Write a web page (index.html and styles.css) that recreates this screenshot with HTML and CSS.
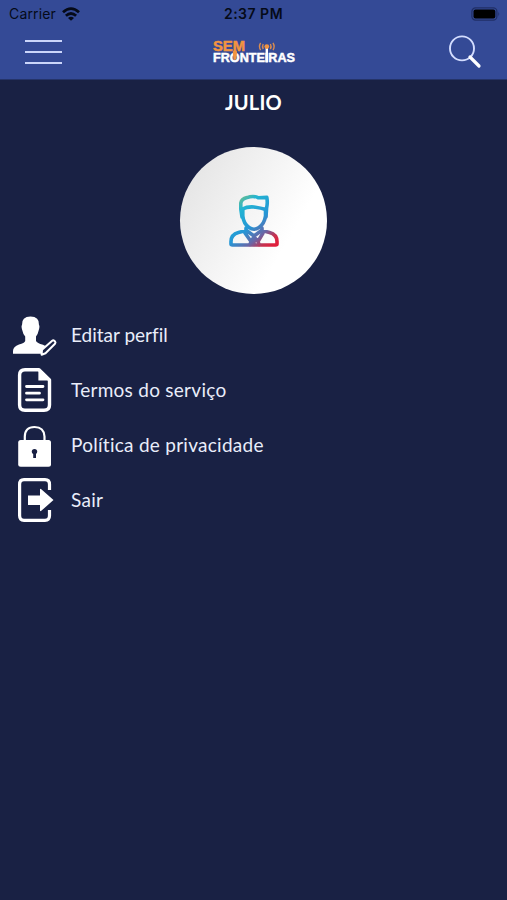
FILE: index.html
```html
<!DOCTYPE html>
<html lang="pt-BR">
<head>
  <meta charset="UTF-8">
  <meta name="viewport" content="width=device-width, initial-scale=1.0">
  <title>Sem Fronteiras - Perfil</title>
  <link rel="stylesheet" href="styles.css">
</head>
<body>
  <header class="header">
    <div class="status-bar">
      <div class="carrier">
        <span class="carrier-name">Carrier</span>
        <svg width="18" height="14" viewBox="0 0 18 14" fill="none" stroke="#050a18" stroke-width="2.8">
          <path d="M1 5.2Q9 -2 17 5.2"/>
          <path d="M3.9 8.7Q9 4.2 14.1 8.7"/>
          <path d="M9 13.8L6 10.9Q9 8.4 12 10.9Z" fill="#050a18" stroke="none"/>
        </svg>
      </div>
      <span class="time">2:37 PM</span>
      <svg class="battery" width="30" height="14" viewBox="0 0 30 14">
        <rect x="0.9" y="0.9" width="25" height="12.2" rx="3.6" fill="none" stroke="#202f67" stroke-width="1.2"/>
        <rect x="2.5" y="2.5" width="21.8" height="9" rx="2" fill="#000"/>
        <path d="M27.4 4.8Q29.2 7 27.4 9.2Z" fill="#202f67"/>
      </svg>
    </div>

    <nav class="nav-bar">
      <div class="menu-button">
        <span></span>
        <span></span>
        <span></span>
      </div>
      <svg class="logo" width="84" height="28" viewBox="0 0 84 28">
        <text class="logo-sem" x="1" y="12.8" textLength="32" lengthAdjust="spacingAndGlyphs">SEM</text>
        <text class="logo-fronteiras" x="1" y="24.2" textLength="82" lengthAdjust="spacingAndGlyphs">FRONTEIRAS</text>
        <!-- microfone -->
        <path d="M20.7 13.5L22.9 11.5L25.1 13.5L24.4 21Q22.9 23 21.4 21Z" fill="#f29441"/>
        <!-- antena -->
        <path d="M53.6 10H56V24.4H53.6Z" fill="#fff"/>
        <circle cx="54.8" cy="8.6" r="2.4" fill="#f29441"/>
        <g fill="none" stroke="#d98c50" stroke-width="1.4">
          <path d="M51.2 6Q49.8 8.6 51.2 11.1"/>
          <path d="M58.4 6Q59.8 8.6 58.4 11.1"/>
          <path d="M48.6 4.9Q46.4 8.6 48.6 12.1"/>
          <path d="M61 4.9Q63.2 8.6 61 12.1"/>
        </g>
      </svg>
      <svg class="search" width="34" height="34" viewBox="0 0 34 34" fill="none">
        <circle cx="14" cy="13.4" r="12" stroke="#d3ddff" stroke-width="1.9"/>
        <path d="M22 22L31 31" stroke="#fff" stroke-width="3.2" stroke-linecap="round"/>
      </svg>
    </nav>
  </header>

  <main class="profile">
    <h1 class="name">JULIO</h1>

    <div class="avatar">
      <svg width="50" height="53" viewBox="0 0 50 53" fill="none" stroke="url(#avatar-color)" stroke-width="3.6" stroke-linejoin="round" stroke-linecap="round">
        <defs>
          <linearGradient id="avatar-color" gradientUnits="userSpaceOnUse" x1="9" y1="5" x2="46" y2="50">
            <stop offset="0" stop-color="#69bc91"/>
            <stop offset="0.17" stop-color="#22b4d2"/>
            <stop offset="0.5" stop-color="#2596d6"/>
            <stop offset="0.73" stop-color="#6966a6"/>
            <stop offset="0.88" stop-color="#c5324f"/>
            <stop offset="1" stop-color="#e01f3c"/>
          </linearGradient>
        </defs>
        <path d="M13 23L11.8 15V9Q12.5 5 18 3.6Q24.5 1.2 29.5 3.8L37.8 3.4Q38.8 9 37.6 14L37 23"/>
        <path d="M13.5 15Q18 12.5 25 13Q32 14 36.8 15.5"/>
        <path d="M13.8 15V22Q14.5 29.5 20 33.5Q25 37 30 33.5Q35.5 29.5 36.5 22V15"/>
        <path d="M17 34V36.5L9.5 38.5Q2 40.5 2 47.5V50Q2 51 3.5 51H46.5Q48 51 48 50V47.5Q48 40.5 40.5 38.5L33 36.5V34"/>
        <path d="M17.5 36.5L25 42L32.5 36.5M16 39L22 47.5L25 43L29 47.5L34 39M22 47.5L21 50.5M29 47.5L30 50.5M25 43V50.5"/>
      </svg>
    </div>

    <ul class="options">
      <li class="option">
        <svg class="option-icon" viewBox="0 0 48 55">
          <path d="M12 17Q11.5 8.5 20.5 8.5Q29.5 8.5 29 17Q30 18 28.8 22Q28 26 26 28.5V33Q27 35 33 36.8Q36 38 36.8 39.4L31 45.7H3V43Q3 38.5 9 36.5Q14.5 35 15.2 33V28.5Q13 26 12.2 22Q11 18 12 17Z" fill="#fff"/>
          <path d="M32 41.8L42.2 32.7Q43.3 31.8 44.5 33L45 33.5Q46 34.7 45 35.8L35.5 45.2L31.6 46.7Z" fill="#192144" stroke="#fff" stroke-width="2" stroke-linejoin="round"/>
        </svg>
        <span class="label-edit">Editar perfil</span>
      </li>
      <li class="option">
        <svg class="option-icon" viewBox="0 0 48 55" fill="none" stroke="#fff" stroke-linecap="round">
          <path d="M29 6.7H15Q9.6 6.7 9.6 12V42Q9.6 47.3 15 47.3H34Q39.5 47.3 39.5 42V17Z" stroke-width="3.4" stroke-linejoin="round"/>
          <path d="M28.4 6V17.5H40Z" fill="#fff" stroke="none"/>
          <path d="M16.5 23.5H33M16.5 30.2H29.5M16.5 36.8H33" stroke-width="2.8"/>
        </svg>
        <span>Termos do serviço</span>
      </li>
      <li class="option">
        <svg class="option-icon" viewBox="0 0 48 55">
          <path d="M14.8 23V18.5Q15 9 24.5 9Q34 9 34.5 18.5V23" fill="none" stroke="#fff" stroke-width="2.2"/>
          <rect x="8.2" y="22" width="32.8" height="26.7" rx="2.5" fill="#fff"/>
          <circle cx="24.5" cy="33.6" r="2.7" fill="#192144"/>
          <path d="M23.2 35H26V40H23.2Z" fill="#192144"/>
        </svg>
        <span>Política de privacidade</span>
      </li>
      <li class="option">
        <svg class="option-icon" viewBox="0 0 48 55">
          <path d="M39.5 17V11.5Q39.5 6.7 35 6.7H14Q9.6 6.7 9.6 11.5V42.5Q9.6 47.3 14 47.3H35Q39.5 47.3 39.5 42.5V37" fill="none" stroke="#fff" stroke-width="3.2"/>
          <path d="M18 22.5H30V16.5Q30 15.2 31.3 16.3L43.5 27L31.3 37.8Q30 38.8 30 37.5V32H18Z" fill="#fff"/>
        </svg>
        <span>Sair</span>
      </li>
    </ul>
  </main>
</body>
</html>
```

FILE: styles.css
```css
* {
  box-sizing: border-box;
}
body {
  margin: 0;
  min-height: 100vh;
  background-color: #192144;
  color: #e9edfa;
  font-family: Lato, "Open Sans", sans-serif;
  font-variant-ligatures: none;
}
.header {
  height: 80px;
  background-color: #344a96;
  border-bottom: 1px solid #253469;
}
.status-bar {
  display: grid;
  grid-template-columns: 1fr auto 1fr;
  align-items: center;
  height: 27px;
  padding: 0 6px 0 9px;
  color: #050a18;
  font-family: Inter, sans-serif;
}
.carrier {
  display: flex;
  align-items: center;
  gap: 6px;
}
.carrier-name {
  font-size: 14px;
  letter-spacing: 0.15px;
}
.time {
  margin-right: 3px;
  font-size: 14px;
  font-weight: 600;
  letter-spacing: 0.5px;
}
.battery {
  justify-self: end;
}
.nav-bar {
  display: grid;
  grid-template-columns: 1fr auto 1fr;
  align-items: center;
  height: 50px;
  padding: 0 25px;
}
.menu-button {
  display: flex;
  flex-direction: column;
  gap: 9px;
  width: 37px;
}
.menu-button span {
  height: 2px;
  background-color: #cbd6fb;
}
.logo-sem,
.logo-fronteiras {
  font-family: "Liberation Sans", Arial, sans-serif;
  font-weight: bold;
  stroke-width: 0.5;
}
.logo-sem {
  font-size: 14px;
  fill: #f29441;
  stroke: #f29441;
}
.logo-fronteiras {
  font-size: 12.5px;
  fill: #fff;
  stroke: #fff;
}
.search {
  justify-self: end;
}
.profile {
  display: flex;
  flex-direction: column;
  align-items: center;
}
.name {
  margin: 10px 0 0;
  color: #fff;
  font-size: 20px;
  line-height: 24px;
  font-weight: bold;
  letter-spacing: 0.2px;
}
.avatar {
  display: flex;
  align-items: center;
  justify-content: center;
  width: 147px;
  height: 147px;
  margin-top: 33px;
  border-radius: 50%;
  background: linear-gradient(120deg, #e4e4e4 8%, #fff 70%);
}
.options {
  align-self: stretch;
  margin: 14px 0 0;
  padding: 0 10px;
  list-style: none;
}
.option {
  display: flex;
  align-items: center;
  gap: 13px;
  height: 55px;
  font-size: 19px;
  letter-spacing: 0.27px;
}
.option span {
  padding-bottom: 2px;
}
.option .label-edit {
  letter-spacing: 0;
}
.option-icon {
  width: 48px;
  height: 55px;
}
```
